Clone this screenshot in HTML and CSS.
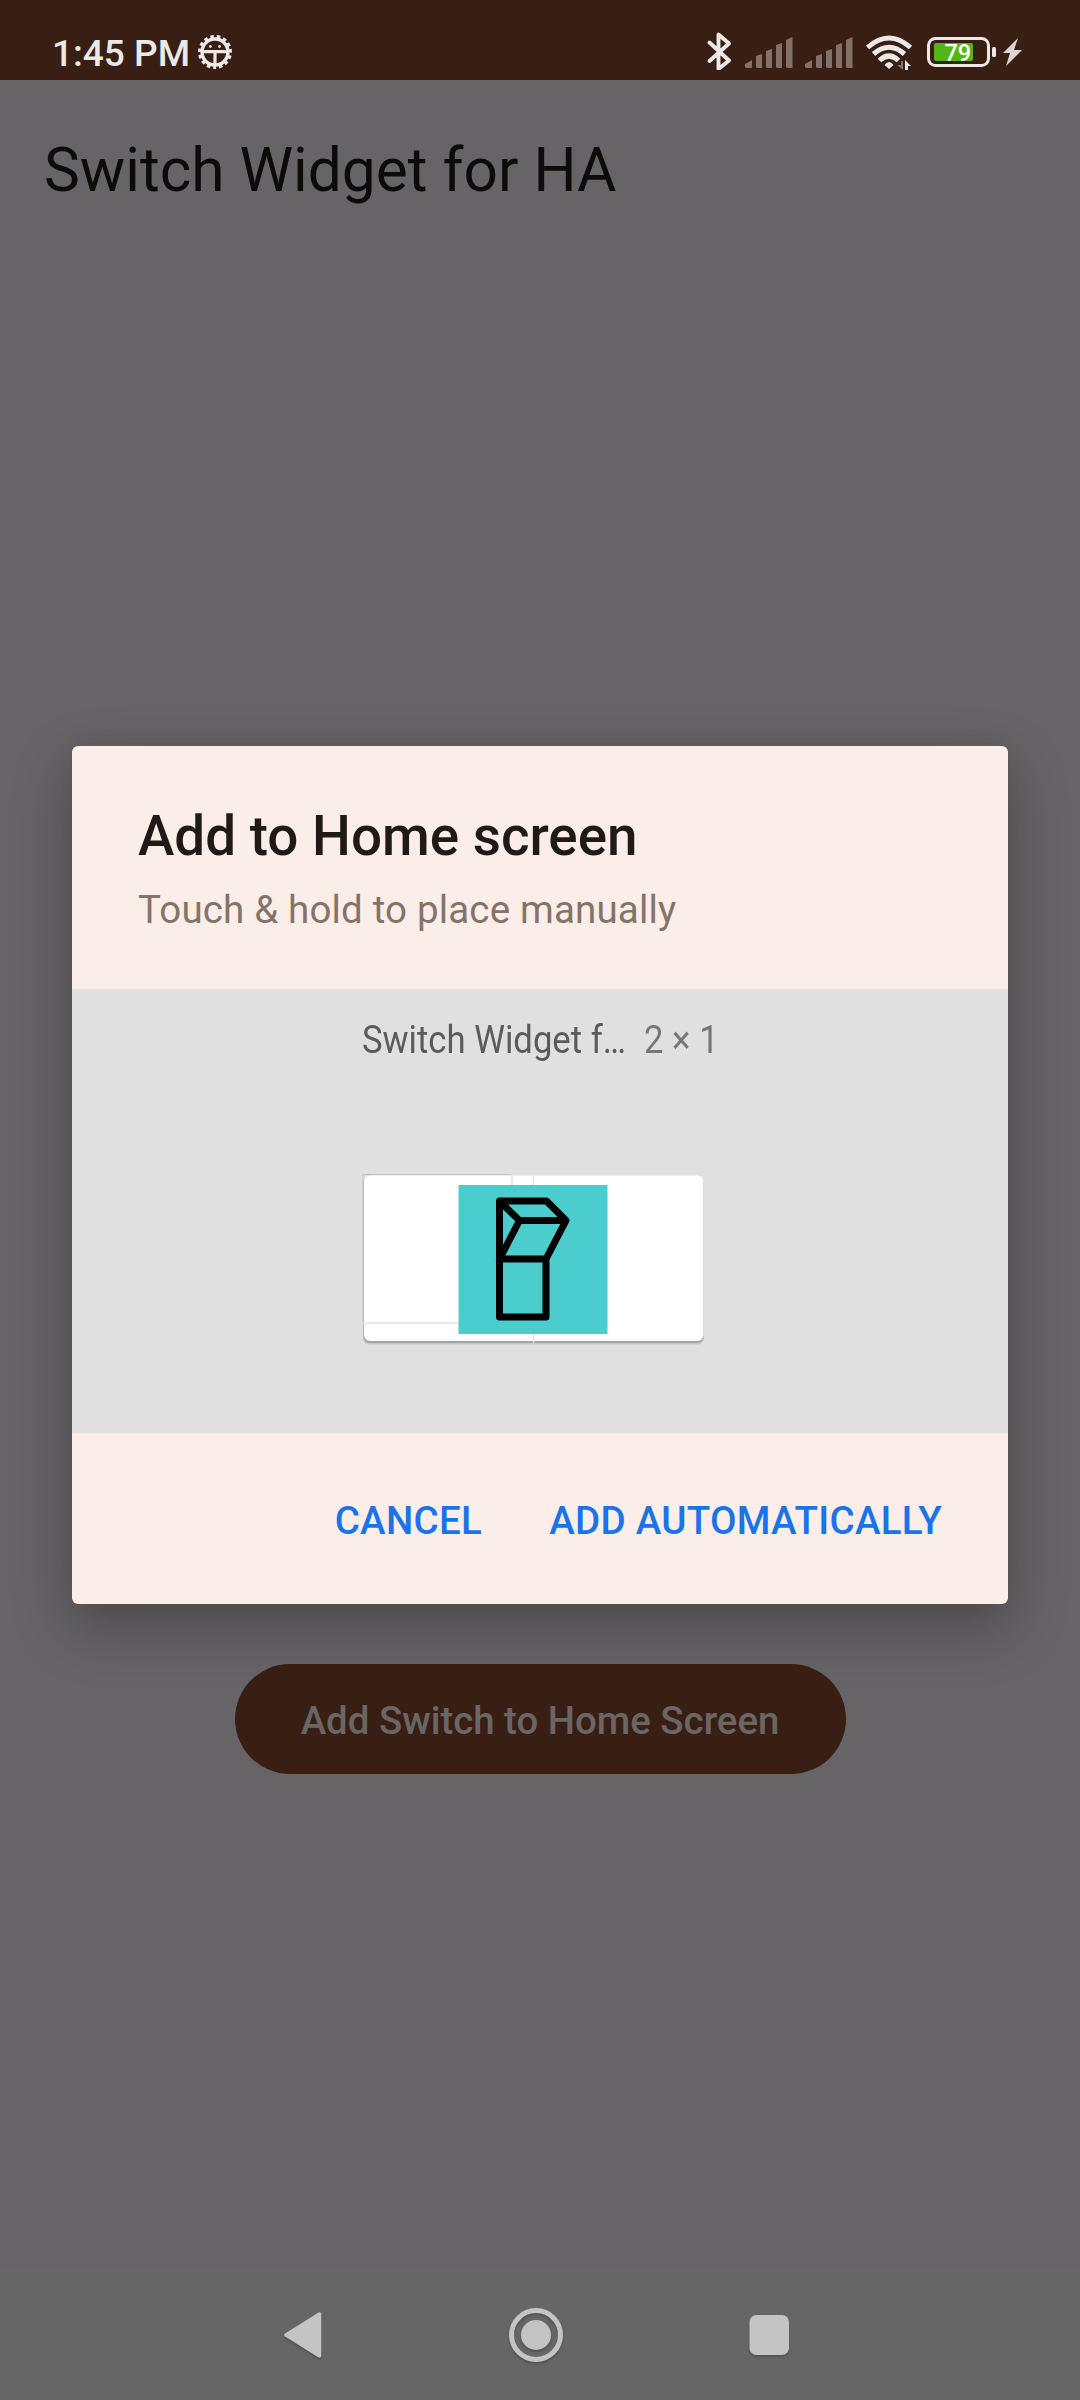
FILE: index.html
```
<!DOCTYPE html>
<html lang="en">
<head>
<meta charset="utf-8">
<title>Switch Widget for HA</title>
<link rel="stylesheet" href="styles.css">
</head>
<body>
<div class="screen">
  <header class="status">
    <span class="clock">1:45 PM</span>
    <svg class="bug" width="36" height="36" viewBox="0 0 36 36">
      <circle cx="18" cy="18" r="14.800" fill="none" stroke="#ece9e7" stroke-width="4.400" stroke-dasharray="3.4 2.799" stroke-dashoffset="1.7" transform="rotate(90 18 18)"/>
      <circle cx="18" cy="18" r="13" fill="none" stroke="#ece9e7" stroke-width="3.400"/>
      <path d="M6 17.6H30M18 17.6V30" stroke="#ece9e7" stroke-width="3.200"/>
      <circle cx="13.4" cy="12.500" r="1.4" fill="#ece9e7"/><circle cx="22.6" cy="12.500" r="1.4" fill="#ece9e7"/>
    </svg>
    <svg class="tray" width="330" height="60" viewBox="700 10 330 60">
      <path d="M709.5 42.5L729 60.5L718.5 69V34.5L729 43.5L709.5 61" fill="none" stroke="#ece9e7" stroke-width="3.9" stroke-linejoin="round" stroke-linecap="round"/>
      <g fill="#837069">
        <path id="bars" d="M745 67V64L752 60V68H746ZM756 67V56L762 54V68H757ZM766 67V51L772 49V68H767ZM776 67V45L782 43V68H777ZM786 67V40L792.500 37V68H787Z"/>
        <use href="#bars" x="60"/>
      </g>
      <g fill="none" stroke="#ece9e7" stroke-width="5">
        <path d="M867.500 47.500Q889 28.500 910.500 47.500"/>
        <path d="M873.500 54Q889 40.500 904.500 54"/>
        <path d="M879.500 60.500Q889 51.500 898.500 60.500"/>
      </g>
      <path d="M884.500 65Q889 59 893.500 65L889 69Z" fill="#ece9e7"/>
      <path d="M903 61V70L897 65H901V61Z" fill="#837069"/>
      <path d="M905 70V60L911 66H908V70Z" fill="#ece9e7"/>
      <rect x="928.500" y="38.500" width="60" height="27" rx="7" fill="none" stroke="#ece9e7" stroke-width="3"/>
      <rect x="934" y="43" width="39" height="18" rx="2" fill="#54b516"/>
      <rect x="992" y="47" width="4" height="10" rx="1.500" fill="#ece9e7"/>
      <text class="level" x="944.500" y="61">79</text>
      <path d="M1018 38L1003 53H1010L1006 66L1022 50H1014Z" fill="#dcd6d3"/>
    </svg>
  </header>
  <main class="app">
    <h1 class="app-title">Switch Widget for HA</h1>
    <section class="dialog">
      <div class="heading">
        <h2 class="dialog-title">Add to Home screen</h2>
        <p class="hint">Touch &amp; hold to place manually</p>
      </div>
      <div class="preview">
        <div class="caption">
          <span class="cap-name"><span class="narrow">Switch Widget f…</span></span>
          <span class="cap-size"><span class="narrow">2 × 1</span></span>
        </div>
        <svg class="widget" width="346" height="174" viewBox="360 1172 346 174">
          <rect x="363" y="1176.500" width="341" height="168" rx="6" fill="#c8c8c8"/>
          <rect x="363.500" y="1177" width="340" height="166" rx="6" fill="#a4a4a4"/>
          <rect x="364" y="1175.500" width="339.500" height="165.500" rx="6" fill="#fff"/>
          <path d="M363 1323V1174.500H512" fill="none" stroke="#c2c2c2"/>
          <path d="M512 1174V1186M533.500 1175V1343M363 1323H460" fill="none" stroke="#e4e4e4" stroke-width="1.500"/>
          <rect x="458.500" y="1185" width="149" height="149" fill="#4bcdcd"/>
          <path d="M499.500 1201H546.500L566 1220.500L546 1259V1317H499.500ZM499.500 1201L519.500 1220.500H566M519.500 1220.500L499.500 1259H546" fill="none" stroke="#000" stroke-width="7" stroke-linejoin="round"/>
        </svg>
      </div>
      <div class="actions">
        <button class="action">CANCEL</button>
        <button class="action">ADD AUTOMATICALLY</button>
      </div>
    </section>
    <button class="add">Add Switch to Home Screen</button>
  </main>
  <nav class="nav">
    <svg width="510" height="64" viewBox="282 2303 510 64">
      <g class="keys" fill="#c4c4c4">
        <path d="M286 2335L319.500 2314V2356Z" stroke="#c4c4c4" stroke-width="3.500" stroke-linejoin="round"/>
        <circle cx="536" cy="2335" r="24.500" fill="none" stroke="#c4c4c4" stroke-width="5"/>
        <circle cx="536" cy="2335" r="15"/>
        <rect x="749.500" y="2315" width="39.500" height="40" rx="7"/>
      </g>
    </svg>
  </nav>
</div>
</body>
</html>
```
FILE: styles.css
```
* { box-sizing: border-box; }
body { margin: 0; font-family: Roboto, sans-serif; }
h1, h2, p { margin: 0; }
button { border: 0; padding: 0; font: inherit; background: none; }
.screen { width: 1080px; height: 2400px; display: flex; flex-direction: column; background: #676468; }
.status { height: 80px; background: #391f13; display: flex; align-items: flex-end; padding: 0 50px 0 52px; color: #ece9e7; }
.clock { font-size: 37px; font-weight: 500; line-height: 44px; margin-bottom: 4px; width: 145px; white-space: nowrap; }
.bug { margin-bottom: 10px; }
.tray { margin: 0 0 10px auto; }
.level { font-size: 23.5px; font-weight: 500; fill: #fff; }
.app { flex: 1; display: flex; flex-direction: column; align-items: center; }
.app-title { align-self: stretch; padding: 55px 44px 0; height: 666px; font-size: 60.4px; font-weight: 400; line-height: 71px; color: #0c0b0a; }
.dialog { width: 936px; height: 858px; border-radius: 6px; background: #fbeee9; overflow: hidden; box-shadow: 0 22px 60px rgba(0,0,0,.28), 0 0 22px rgba(0,0,0,.06); display: flex; flex-direction: column; }
.heading { height: 243px; padding: 58px 66px 0; }
.dialog-title { font-size: 54.8px; font-weight: 500; line-height: 64px; color: #201a17; }
.hint { margin-top: 19px; font-size: 38.5px; letter-spacing: .17px; line-height: 45px; color: #85736b; }
.preview { height: 444px; background: #e0e0e0; padding: 28px 0 0 288px; }
.caption { display: flex; height: 45px; font-size: 38.5px; line-height: 45px; color: #5b5b5b; }
.cap-name { width: 282px; margin-left: 2px; white-space: nowrap; }
.cap-size { color: #777; white-space: nowrap; }
.narrow { display: inline-block; transform: scaleX(.9); transform-origin: left; }
.widget { display: block; margin-top: 110px; }
.actions { flex: 1; display: flex; justify-content: flex-end; gap: 67px; padding: 65px 66px 0 0; }
.action { height: 45px; line-height: 45px; font-size: 38.5px; letter-spacing: .3px; font-weight: 500; color: #1a73e8; }
.add { width: 611px; height: 110px; margin-top: 60px; padding: 2px 0 0; border-radius: 55px; background: #391f13; color: #6a6665; font-size: 38.4px; font-weight: 500; }
.nav { height: 130px; background: #666; padding: 33px 0 0 282px; }
.keys { filter: drop-shadow(0 2px 1px rgba(0,0,0,.2)); }
```
